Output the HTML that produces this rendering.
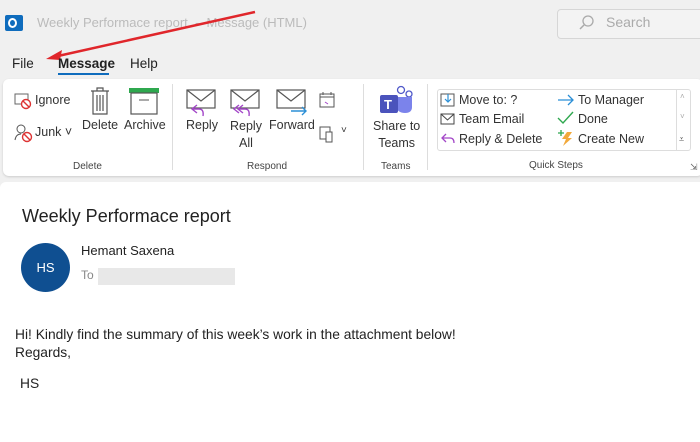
<!DOCTYPE html>
<html><head><style>
*{margin:0;padding:0;box-sizing:border-box}
body{width:700px;height:438px;background:#f0f0f0;font-family:"Segoe UI","Liberation Sans",sans-serif;position:relative;overflow:hidden;color:#222}
.a{position:absolute;white-space:nowrap}
.t{font-size:12.5px;color:#333}
.g{font-size:10px;color:#444}
.sep{position:absolute;width:1px;background:#ddd}
</style></head><body>
<div class="a" style="left:5px;top:15px;width:18px;height:16px;background:#0f6cbd;border-radius:2px"></div>
<div class="a" style="left:8px;top:18px;width:9px;height:10px;border:2px solid #fff;border-radius:50%"></div>
<div class="a" style="left:37px;top:15px;font-size:13px;color:#bbb">Weekly Performace report &nbsp;-&nbsp; Message (HTML)</div>
<div class="a" style="left:557px;top:9px;width:150px;height:30px;border:1px solid #d6d6d6;border-radius:4px;background:#f3f3f3"></div>
<svg class="a" style="left:577px;top:14px" width="18" height="18"><circle cx="11" cy="7" r="5" fill="none" stroke="#aaa" stroke-width="1.3"/><path d="M7 11L3 15" stroke="#aaa" stroke-width="1.5"/></svg>
<div class="a" style="left:606px;top:14px;font-size:14px;color:#aaa">Search</div>
<svg class="a" style="left:0;top:0" width="260" height="70"><path d="M255 12L58 56" stroke="#e0262b" stroke-width="2.5"/><path d="M46 59L62 50L60 60Z" fill="#e0262b"/></svg>
<div class="a" style="left:12px;top:56px;font-size:13.5px">File</div>
<div class="a" style="left:58px;top:56px;font-size:13.5px;font-weight:bold;color:#222">Message</div>
<div class="a" style="left:58px;top:73px;width:51px;height:2px;background:#0f6cbd"></div>
<div class="a" style="left:130px;top:56px;font-size:13.5px">Help</div>
<div class="a" style="left:3px;top:79px;width:700px;height:97px;background:#fff;border-radius:6px;box-shadow:0 1px 2px #ccc"></div>
<svg class="a" style="left:13px;top:92px" width="20" height="18"><rect x="2" y="2" width="13" height="10" fill="none" stroke="#666"/><circle cx="13" cy="12" r="4.5" fill="#fff" stroke="#d33" stroke-width="1.4"/><path d="M10 9L16 15" stroke="#d33" stroke-width="1.4"/></svg>
<div class="a t" style="left:35px;top:93px">Ignore</div>
<svg class="a" style="left:13px;top:123px" width="22" height="20"><circle cx="8" cy="6" r="4" fill="none" stroke="#555"/><path d="M2 17Q3 11 8 11" fill="none" stroke="#555"/><circle cx="14" cy="14" r="4.5" fill="#fff" stroke="#d33" stroke-width="1.4"/><path d="M11 11L17 17" stroke="#d33" stroke-width="1.4"/></svg>
<div class="a t" style="left:35px;top:125px">Junk ˅</div>
<svg class="a" style="left:88px;top:86px" width="24" height="30"><path d="M3 5H21M9 5V2H15V5M5 5V28H19V5M9 9V25M12 9V25M15 9V25" fill="none" stroke="#555" stroke-width="1.2"/></svg>
<div class="a t" style="left:82px;top:118px">Delete</div>
<svg class="a" style="left:128px;top:86px" width="32" height="30"><rect x="1" y="2" width="30" height="5" fill="#2fa84f"/><rect x="3" y="7" width="26" height="21" fill="none" stroke="#555" stroke-width="1.2"/><path d="M11 14H21" stroke="#555"/></svg>
<div class="a t" style="left:124px;top:118px">Archive</div>
<div class="a g" style="left:73px;top:161px">Delete</div>
<div class="sep" style="left:172px;top:84px;height:86px"></div>
<svg class="a" style="left:185px;top:88px" width="32" height="30"><rect x="2" y="2" width="28" height="18" fill="#fff" stroke="#555" stroke-width="1.2"/><path d="M2 2L16 13L30 2" fill="none" stroke="#555" stroke-width="1.2"/><path d="M12 17L7 21L12 25M7 21H14Q19 21 18 28" fill="none" stroke="#a347c8" stroke-width="1.4"/></svg>
<div class="a t" style="left:186px;top:118px">Reply</div>
<svg class="a" style="left:229px;top:88px" width="32" height="30"><rect x="2" y="2" width="28" height="18" fill="#fff" stroke="#555" stroke-width="1.2"/><path d="M2 2L16 13L30 2" fill="none" stroke="#555" stroke-width="1.2"/><path d="M10 17L5 21L10 25M14 17L9 21L14 25M9 21H16Q21 21 20 28" fill="none" stroke="#a347c8" stroke-width="1.4"/></svg>
<div class="a t" style="left:230px;top:118px;text-align:center;line-height:17px">Reply<br>All</div>
<svg class="a" style="left:275px;top:88px" width="34" height="30"><rect x="2" y="2" width="28" height="18" fill="#fff" stroke="#555" stroke-width="1.2"/><path d="M2 2L16 13L30 2" fill="none" stroke="#555" stroke-width="1.2"/><path d="M16 23H31M27 19L31 23L27 27" fill="none" stroke="#2b8fd6" stroke-width="1.4"/></svg>
<div class="a t" style="left:269px;top:118px">Forward</div>
<svg class="a" style="left:318px;top:91px" width="18" height="18"><rect x="2" y="3" width="14" height="13" fill="none" stroke="#555"/><path d="M2 6H16M5 1V4M13 1V4" stroke="#555"/><path d="M7 11L10 13" stroke="#a347c8"/></svg>
<svg class="a" style="left:318px;top:123px" width="18" height="20"><rect x="2" y="4" width="10" height="12" fill="none" stroke="#555"/><rect x="8" y="9" width="6" height="10" fill="#fff" stroke="#555"/></svg>
<div class="a t" style="left:341px;top:125px;font-size:10px">˅</div>
<div class="a g" style="left:247px;top:161px">Respond</div>
<div class="sep" style="left:363px;top:84px;height:86px"></div>
<svg class="a" style="left:378px;top:85px" width="36" height="32"><circle cx="23" cy="5" r="3.5" fill="#fff" stroke="#5059c9" stroke-width="1.3"/><circle cx="31" cy="9" r="3" fill="#fff" stroke="#5059c9" stroke-width="1.3"/><path d="M18 12H34V22Q34 28 27 28Q20 28 18 22Z" fill="#7b83eb"/><rect x="2" y="10" width="18" height="18" rx="2" fill="#4b53bc"/><text x="6" y="24" font-size="13" font-weight="bold" fill="#fff" font-family="Liberation Sans">T</text></svg>
<div class="a t" style="left:373px;top:118px;text-align:center;line-height:17px">Share to<br>Teams</div>
<div class="a g" style="left:381px;top:161px">Teams</div>
<div class="sep" style="left:427px;top:84px;height:86px"></div>
<div class="a" style="left:437px;top:89px;width:254px;height:62px;border:1px solid #ddd;border-radius:3px"></div>
<div class="a" style="left:676px;top:90px;width:14px;height:60px;border-left:1px solid #ddd"></div>
<div class="a" style="left:680px;top:92px;font-size:8px;color:#aaa">˄</div>
<div class="a" style="left:680px;top:112px;font-size:8px;color:#aaa">˅</div>
<div class="a" style="left:679px;top:134px;font-size:9px;color:#555">⩡</div>
<svg class="a" style="left:440px;top:92px" width="16" height="16"><rect x="1" y="2" width="13" height="12" fill="none" stroke="#555"/><path d="M8 2V10M5 7L8 10L11 7" fill="none" stroke="#2b8fd6" stroke-width="1.2"/></svg>
<div class="a t" style="left:459px;top:93px">Move to: ?</div>
<svg class="a" style="left:440px;top:112px" width="16" height="14"><rect x="1" y="2" width="13" height="10" fill="none" stroke="#444"/><path d="M1 2L7.5 8L14 2" fill="none" stroke="#444"/></svg>
<div class="a t" style="left:459px;top:112px">Team Email</div>
<svg class="a" style="left:440px;top:131px" width="16" height="16"><path d="M6 3L2 7L6 11M2 7H10Q14 7 14 12" fill="none" stroke="#a347c8" stroke-width="1.3"/></svg>
<div class="a t" style="left:459px;top:132px">Reply &amp; Delete</div>
<svg class="a" style="left:557px;top:93px" width="18" height="14"><path d="M1 7H16M11 2L16 7L11 12" fill="none" stroke="#2b8fd6" stroke-width="1.3"/></svg>
<div class="a t" style="left:578px;top:93px">To Manager</div>
<svg class="a" style="left:557px;top:111px" width="18" height="14"><path d="M1 7L6 12L16 1" fill="none" stroke="#2fa84f" stroke-width="1.4"/></svg>
<div class="a t" style="left:578px;top:112px">Done</div>
<svg class="a" style="left:557px;top:129px" width="16" height="18"><path d="M10 3H15L11 9H15L6 17L9 10H5Z" fill="#f2a93b"/><path d="M4 1V7M1 4H7" stroke="#2fa84f" stroke-width="1.3"/></svg>
<div class="a t" style="left:578px;top:132px">Create New</div>
<div class="a g" style="left:529px;top:160px">Quick Steps</div>
<div class="a" style="left:690px;top:162px;font-size:9px;color:#666">⇲</div>
<div class="a" style="left:0;top:182px;width:700px;height:260px;background:#fff;border-radius:6px 0 0 0"></div>
<div class="a" style="left:22px;top:206px;font-size:18px;color:#222">Weekly Performace report</div>
<div class="a" style="left:21px;top:243px;width:49px;height:49px;border-radius:50%;background:#0f4f91;color:#fff;font-size:13px;line-height:49px;text-align:center;font-family:'Liberation Sans',sans-serif">HS</div>
<div class="a" style="left:81px;top:243px;font-size:13px;font-family:'Liberation Sans',sans-serif;color:#222">Hemant Saxena</div>
<div class="a" style="left:81px;top:268px;font-size:12px;color:#888">To</div>
<div class="a" style="left:98px;top:268px;width:137px;height:17px;background:#e8e8e8"></div>
<div class="a" style="left:15px;top:327px;font-size:13.8px;color:#222">Hi! Kindly find the summary of this week’s work in the attachment below!</div>
<div class="a" style="left:15px;top:345px;font-size:13.8px;color:#222">Regards,</div>
<div class="a" style="left:20px;top:376px;font-size:13.8px;color:#222">HS</div>
</body></html>
